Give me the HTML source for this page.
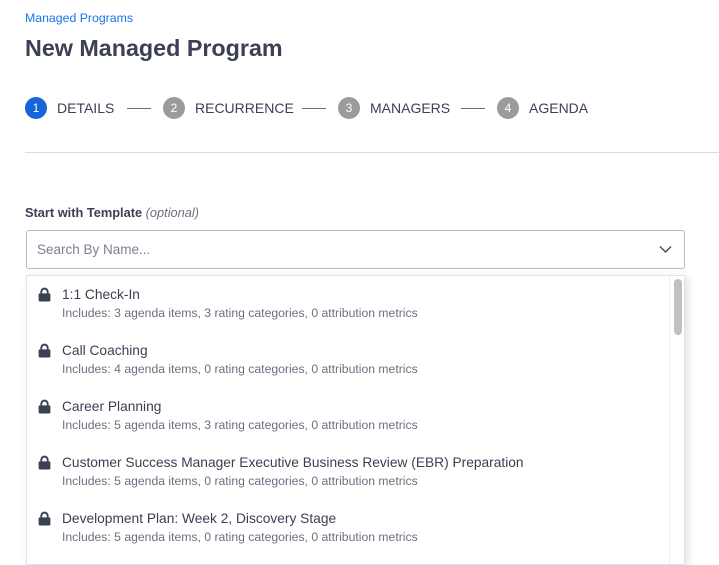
<!DOCTYPE html>
<html><head><meta charset="utf-8"><style>
*{margin:0;padding:0;box-sizing:border-box}
body{width:719px;height:556px;overflow:hidden;background:#fff;font-family:"Liberation Sans",sans-serif;color:#3b4052;position:relative}
.a{position:absolute;white-space:nowrap}
.crumb{left:25px;top:11px;font-size:12.3px;color:#1a73e8}
.h1{left:25px;top:35px;font-size:23.3px;font-weight:bold;color:#3b4052}
.step{position:absolute;top:97px;height:22px;display:flex;align-items:center;font-size:14px;color:#3b4052}
.c{width:22px;height:22px;border-radius:50%;background:#9b9b9b;color:#fff;font-size:12px;display:flex;align-items:center;justify-content:center;margin-right:10px}
.line{position:absolute;top:108px;height:1px;background:#6b7080;width:24px}
.div{position:absolute;left:25px;right:0;top:152px;height:1px;background:#dcdce3}
.lbl{left:25px;top:205px;font-size:12.8px;font-weight:bold;color:#3b4052}
.lbl i{font-weight:normal;color:#6b6f80}
.input{position:absolute;left:26px;top:230px;width:659px;height:39px;border:1px solid #b8b8c8;border-radius:3px}
.input span{position:absolute;left:10px;top:11px;font-size:13.5px;color:#7b7f90}
.dd{position:absolute;left:26px;top:275px;width:659px;height:290px;border:1px solid #e1e1e6;box-shadow:3px 2px 8px rgba(0,0,0,.12);background:#fff}
.sb{position:absolute;right:0;top:0;width:15px;height:100%;border-left:1px solid #eee}
.thumb{position:absolute;left:4px;top:3px;width:8px;height:56px;border-radius:4px;background:#c1c1c1}
.it{position:absolute;left:0}
.t{position:absolute;left:35px;top:11px;font-size:13.75px;color:#3b4052;white-space:nowrap}
.s{position:absolute;left:35px;top:30px;font-size:12.2px;color:#6b6f80;white-space:nowrap}
.lock{position:absolute;left:11px;top:11px}
</style></head><body>
<div class="a crumb">Managed Programs</div>
<div class="a h1">New Managed Program</div>
<div class="step" style="left:25px"><div class="c" style="background:#1565d8">1</div>DETAILS</div>
<div class="line" style="left:127px"></div>
<div class="step" style="left:163px"><div class="c">2</div>RECURRENCE</div>
<div class="line" style="left:302px"></div>
<div class="step" style="left:338px"><div class="c">3</div>MANAGERS</div>
<div class="line" style="left:461px"></div>
<div class="step" style="left:497px"><div class="c">4</div>AGENDA</div>
<div class="div"></div>
<div class="a lbl">Start with Template <i>(optional)</i></div>
<div class="input"><span>Search By Name...</span>
<svg style="position:absolute;right:12px;top:14px" width="13" height="9" viewBox="0 0 13 9"><path d="M1 1.5l5.5 5.5 5.5-5.5" fill="none" stroke="#4a4f63" stroke-width="1.5"/></svg></div>
<div class="dd">
<div class="sb"><div class="thumb"></div></div>
<div class="it" style="top:0"><svg class="lock" width="13" height="15" viewBox="0 0 12 14"><path d="M3 6V4.5a3 3 0 016 0V6" fill="none" stroke="#3b4052" stroke-width="1.8"/><rect x="0.5" y="6" width="11" height="7.5" rx="1" fill="#3b4052"/></svg><div class="t">1:1 Check-In</div><div class="s">Includes: 3 agenda items, 3 rating categories, 0 attribution metrics</div></div>
<div class="it" style="top:56px"><svg class="lock" width="13" height="15" viewBox="0 0 12 14"><path d="M3 6V4.5a3 3 0 016 0V6" fill="none" stroke="#3b4052" stroke-width="1.8"/><rect x="0.5" y="6" width="11" height="7.5" rx="1" fill="#3b4052"/></svg><div class="t">Call Coaching</div><div class="s">Includes: 4 agenda items, 0 rating categories, 0 attribution metrics</div></div>
<div class="it" style="top:112px"><svg class="lock" width="13" height="15" viewBox="0 0 12 14"><path d="M3 6V4.5a3 3 0 016 0V6" fill="none" stroke="#3b4052" stroke-width="1.8"/><rect x="0.5" y="6" width="11" height="7.5" rx="1" fill="#3b4052"/></svg><div class="t">Career Planning</div><div class="s">Includes: 5 agenda items, 3 rating categories, 0 attribution metrics</div></div>
<div class="it" style="top:168px"><svg class="lock" width="13" height="15" viewBox="0 0 12 14"><path d="M3 6V4.5a3 3 0 016 0V6" fill="none" stroke="#3b4052" stroke-width="1.8"/><rect x="0.5" y="6" width="11" height="7.5" rx="1" fill="#3b4052"/></svg><div class="t">Customer Success Manager Executive Business Review (EBR) Preparation</div><div class="s">Includes: 5 agenda items, 0 rating categories, 0 attribution metrics</div></div>
<div class="it" style="top:224px"><svg class="lock" width="13" height="15" viewBox="0 0 12 14"><path d="M3 6V4.5a3 3 0 016 0V6" fill="none" stroke="#3b4052" stroke-width="1.8"/><rect x="0.5" y="6" width="11" height="7.5" rx="1" fill="#3b4052"/></svg><div class="t">Development Plan: Week 2, Discovery Stage</div><div class="s">Includes: 5 agenda items, 0 rating categories, 0 attribution metrics</div></div>
</div>
</body></html>
